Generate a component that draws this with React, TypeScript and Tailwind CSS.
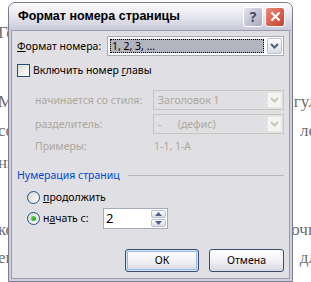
import React from "react";

const ui = { fontFamily: '"Noto Sans", Tahoma, sans-serif' };
const titleFont = { fontFamily: '"Liberation Sans", Arial, sans-serif' };
const docFont = { fontFamily: '"Liberation Serif", "Times New Roman", serif' };

// background document lines: [height, left fragment, right fragment]
const docLines: [number, string, string][] = [
    [19, "", ""],
    [28, "Го", ""],
    [41, "", ""],
    [28, "Мо", "гул"],
    [1, "", ""],
    [28, "со", "ло"],
    [4, "", ""],
    [28, "ни", ""],
    [39, "", ""],
    [28, "ко", "очн"],
    [28, "ев", "дл"],
];

const DropArrow = ({ disabled }: { disabled?: boolean }) => (
    <svg width="9" height="6" viewBox="0 0 9 6">
        <path
            d="M1 1 L4.5 4.5 L8 1"
            fill="none"
            stroke={disabled ? "#c9c7ba" : "#4d6185"}
            strokeWidth="2"
        />
    </svg>
);

const Combo = ({
    value,
    disabled,
    selected,
    className,
}: {
    value: string;
    disabled?: boolean;
    selected?: boolean;
    className?: string;
}) => (
    <div
        className={`flex h-[20px] items-stretch border ${
            disabled ? "border-[#c9c7ba] bg-[#e0dfe3]" : "border-[#a5acb5] bg-white"
        } ${className ?? ""}`}
    >
        <div className="flex flex-1 items-center p-[2px]">
            {selected ? (
                <div className="flex h-full flex-1 items-center border border-dotted border-black bg-[#b2b4bf] pl-[1px] text-black">
                    {value}
                </div>
            ) : (
                <span className={`whitespace-pre pl-[2px] ${disabled ? "text-[#aca899]" : "text-black"}`}>{value}</span>
            )}
        </div>
        <div className="p-[1px]">
            <div
                className={`flex h-full w-[15px] items-center justify-center rounded-[2px] border ${
                    disabled
                        ? "border-[#e8e8e4] bg-[#f4f4f0]"
                        : "border-[#bcc3d0] bg-gradient-to-b from-white to-[#d9dbe6]"
                }`}
            >
                <DropArrow disabled={disabled} />
            </div>
        </div>
    </div>
);

const Radio = ({ checked }: { checked?: boolean }) => (
    <div className="flex h-[13px] w-[13px] shrink-0 items-center justify-center rounded-full border border-[#1c5180] bg-gradient-to-br from-[#d6d5cf] to-white">
        {checked ? (
            <div className="h-[5px] w-[5px] rounded-full bg-gradient-to-br from-[#55d551] to-[#21a121]" />
        ) : null}
    </div>
);

const XpButton = ({ label, isDefault, className }: { label: string; isDefault?: boolean; className?: string }) => (
    <div
        className={`flex h-[23px] items-center justify-center rounded-[3px] border border-[#3d4c6b] bg-gradient-to-b from-white via-[#f2f2f5] to-[#d8d6e2] ${
            isDefault ? "shadow-[inset_0_0_0_1px_#cee7ff,inset_0_0_0_2px_#98b8ea]" : ""
        } ${className ?? ""}`}
    >
        {label}
    </div>
);

const Spinner = () => (
    <div className="flex w-[15px] flex-col gap-[1px] py-[1px]">
        <div className="flex h-[8px] items-center justify-center rounded-[2px] border border-[#b9bfcc] bg-gradient-to-b from-white to-[#d9dbe6]">
            <svg width="7" height="4" viewBox="0 0 7 4">
                <path d="M0 4 L3.5 0 L7 4 Z" fill="#4d6185" />
            </svg>
        </div>
        <div className="flex h-[8px] items-center justify-center rounded-[2px] border border-[#b9bfcc] bg-gradient-to-b from-white to-[#d9dbe6]">
            <svg width="7" height="4" viewBox="0 0 7 4">
                <path d="M0 0 L3.5 4 L7 0 Z" fill="#4d6185" />
            </svg>
        </div>
    </div>
);

const PageNumberDialog = () => (
    <div
        className="absolute left-[8px] top-[2px] flex h-[280px] w-[285px] flex-col rounded-t-[7px] border border-[#7b7a93] bg-[#cfcfdc]"
        style={ui}
    >
        {/* title bar */}
        <div className="flex h-[27px] shrink-0 items-center justify-between rounded-t-[6px] bg-gradient-to-b from-[#fbfbfd] via-[#e6e6ee] to-[#c9c9d8] pl-[9px] pr-[7px]">
            <span className="whitespace-nowrap text-[12.5px] font-bold text-black" style={titleFont}>
                Формат номера страницы
            </span>
            <div className="flex gap-[2px]">
                <div className="flex h-[20px] w-[20px] items-center justify-center rounded-[3px] border border-white bg-gradient-to-br from-[#e4e3ee] to-[#a9a8bf] text-[14px] font-bold text-[#4a4a5e]">
                    ?
                </div>
                <div className="flex h-[20px] w-[20px] items-center justify-center rounded-[3px] border border-white bg-gradient-to-br from-[#e88a78] to-[#c4412c]">
                    <svg width="11" height="11" viewBox="0 0 11 11">
                        <path d="M1.5 1.5 L9.5 9.5 M9.5 1.5 L1.5 9.5" stroke="white" strokeWidth="2.2" />
                    </svg>
                </div>
            </div>
        </div>

        {/* client area */}
        <div className="mx-[2px] mb-[2px] flex flex-1 flex-col whitespace-nowrap border border-[#9a99b0] bg-[#e0dfe3] pl-[5px] pr-[5px] text-[10.5px] leading-[13px] text-black">
            <div className="mt-[5px] flex items-center">
                <span className="w-[90px] shrink-0">
                    <u>Ф</u>ормат номера:
                </span>
                <Combo value="1, 2, 3, ..." selected className="flex-1" />
            </div>

            <div className="mt-[8px] flex items-center gap-[3px]">
                <div className="h-[13px] w-[13px] border border-[#1c5180] bg-gradient-to-br from-[#dcdcd7] to-white" />
                <span>
                    Включить номер <u>г</u>лавы
                </span>
            </div>

            <div className="mt-[13px] flex items-center text-[#aca899]">
                <span className="w-[136px] shrink-0 pl-[18px]">начинается со стиля:</span>
                <Combo value="Заголовок 1" disabled className="flex-1" />
            </div>
            <div className="mt-[4px] flex items-center text-[#aca899]">
                <span className="w-[136px] shrink-0 pl-[18px]">разделитель:</span>
                <Combo value="-      (дефис)" disabled className="flex-1" />
            </div>
            <div className="mt-[5px] flex h-[14px] items-center text-[#aca899]">
                <span className="w-[136px] shrink-0 pl-[18px]">Примеры:</span>
                <span className="pl-[1px]">1-1, 1-A</span>
            </div>

            <div className="mt-[15px] flex h-[14px] items-center gap-[8px]">
                <span className="text-[#0046d5]">Нумерация страниц</span>
                <div className="h-px flex-1 bg-[#b8b7c0]" />
            </div>

            <div className="mt-[9px] flex items-center gap-[3px] pl-[10px]">
                <Radio />
                <span>
                    <u>п</u>родолжить
                </span>
            </div>
            <div className="mt-[4px] flex items-center pl-[10px]">
                <Radio checked />
                <span className="w-[63px] shrink-0 pl-[3px]">
                    н<u>а</u>чать с:
                </span>
                <div className="flex h-[21px] w-[65px] items-stretch border border-[#a5acb5] bg-white pr-[1px]">
                    <span className="flex flex-1 items-center pl-[2px] text-[13px]">2</span>
                    <Spinner />
                </div>
            </div>

            <div className="mt-[20px] flex justify-end gap-[10px]">
                <XpButton label="ОК" isDefault className="w-[74px]" />
                <XpButton label="Отмена" className="w-[75px]" />
            </div>
        </div>
    </div>
);

export default function App() {
    return (
        <div className="relative h-[282px] w-[311px] overflow-hidden bg-white">
            <div className="flex flex-col text-[17px] text-[#6e6e6e]" style={docFont}>
                {docLines.map(([h, left, right], i) => (
                    <div key={i} className="flex items-center justify-between overflow-hidden" style={{ height: h }}>
                        <span className="-ml-[2px]">{left}</span>
                        <span className="-mr-[6px]">{right}</span>
                    </div>
                ))}
            </div>
            <PageNumberDialog />
        </div>
    );
}
